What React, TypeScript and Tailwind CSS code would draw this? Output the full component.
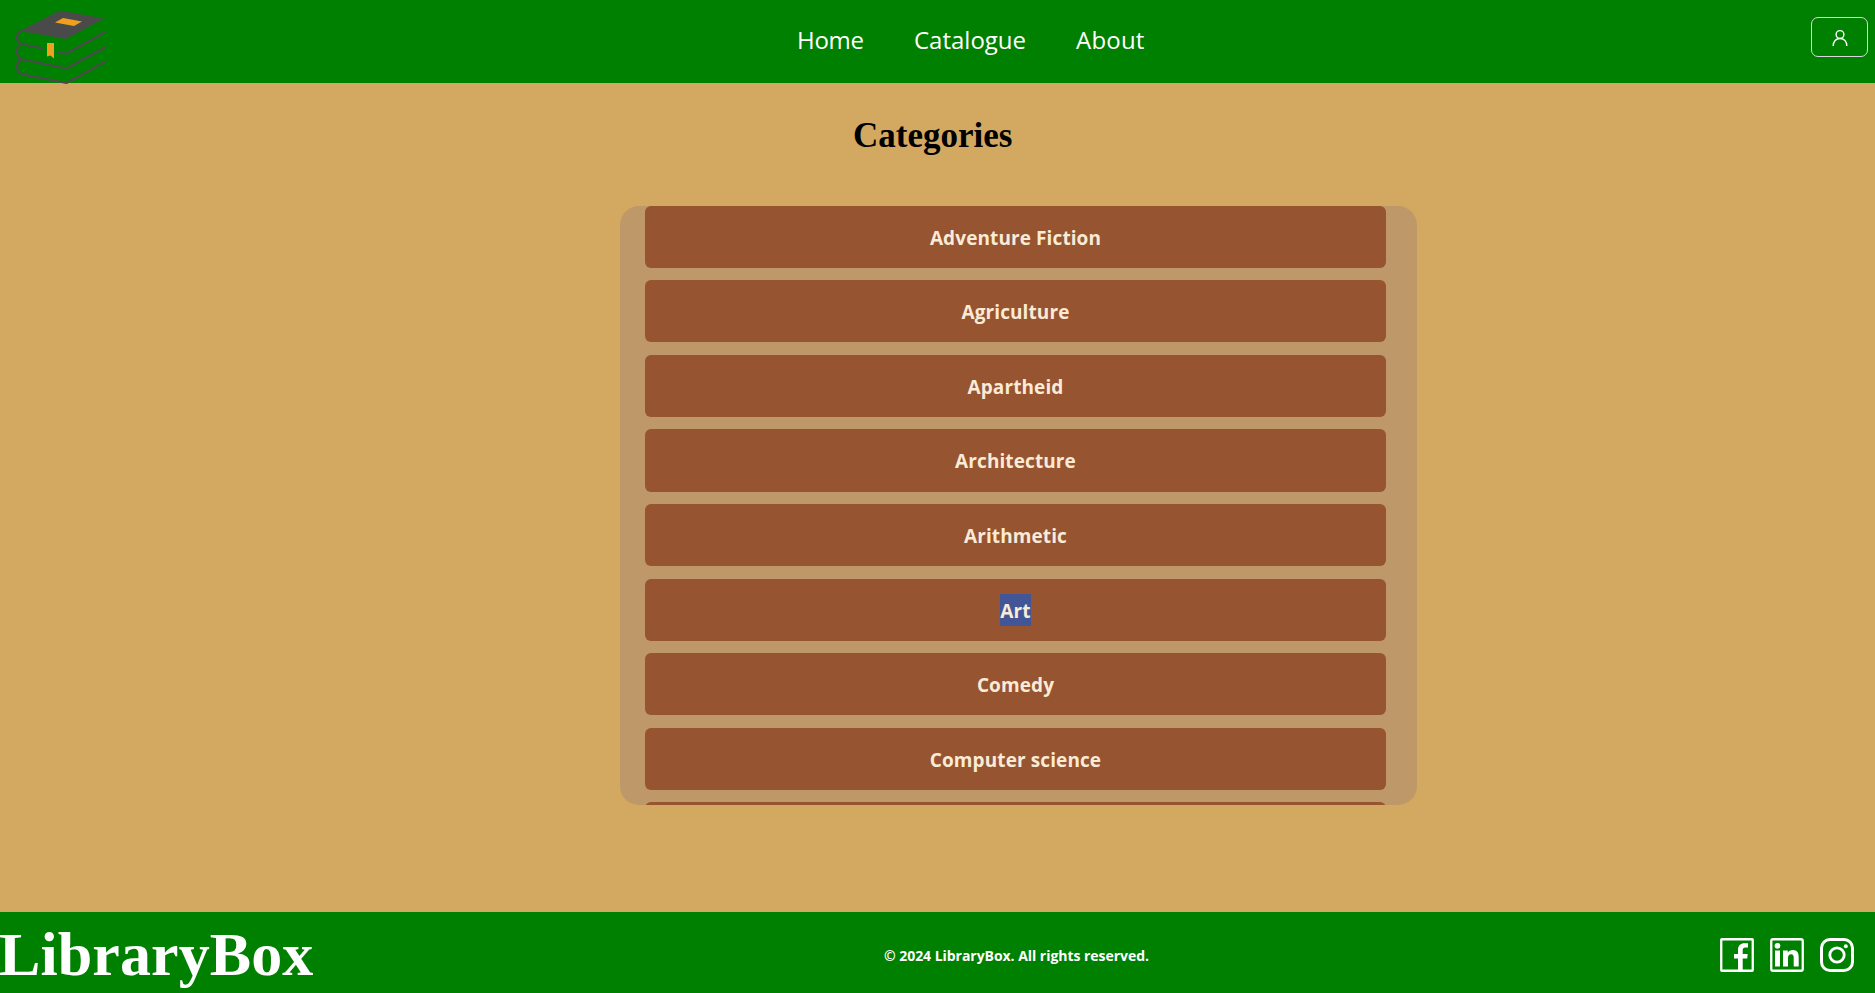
const categories = [
  "Adventure Fiction",
  "Agriculture",
  "Apartheid",
  "Architecture",
  "Arithmetic",
  "Art",
  "Comedy",
  "Computer science",
];

function BooksLogo() {
  return (
    <svg className="ml-[15px] mt-2 block h-[80px] w-[95px] shrink-0 overflow-visible" viewBox="15 8 95 80" fill="none">
      <path d="M60 10.500 104 18.500 66 39 20 31Z" fill="#4b4a4b" />
      <g stroke="#4b4a4b" strokeWidth="2.200" strokeLinejoin="round">
        <path d="M24 30.500C19 31 17 34 17 37C17 41 19 44 23 44.500L43.500 48.500M57.500 52.200L66.500 53.500L105.500 32" />
        <path d="M21 44.500C18 46 17 49 17 52C17 56 19 59 23 59.500L66.500 68.500L105.500 47" />
        <path d="M21 59.500C18 61 17 64 17 67C17 71 19 73.500 23 74.300L66.500 83L105.500 61.500" />
      </g>
      <path d="M63 18 82 21.500 74 26 55 22.500Z" fill="#f0a01e" />
      <path d="M47 43H54V58.500L50.500 55.500L47 56.500Z" fill="#f0a01e" />
    </svg>
  );
}

function UserIcon() {
  return (
    <svg className="mt-0.5 h-4 w-4" viewBox="0 0 16 16" fill="none" stroke="#fff" strokeWidth="1.4">
      <circle cx="8" cy="4.500" r="3.900" />
      <path d="M1.200 16C1.200 11.300 4 8.500 8 8.500S14.800 11.300 14.800 16" />
    </svg>
  );
}

function FacebookIcon() {
  return (
    <svg className="h-[34px] w-[34px]" viewBox="0 0 34 34" fill="none">
      <rect x="1.250" y="1.250" width="31.500" height="31.500" rx=".6" stroke="#fff" strokeWidth="2.300" />
      <path d="M18 33V20.500H14V16H18V12C18 7.500 20.500 5.200 24.500 5.200H28V9.500H25.500C23.500 9.500 22.700 10.500 22.700 12.200V16H27.700L27.200 20.500H22.700V33Z" fill="#fff" />
    </svg>
  );
}

function LinkedinIcon() {
  return (
    <svg className="h-[34px] w-[34px]" viewBox="0 0 34 34" fill="none">
      <rect x="1.250" y="1.250" width="31.500" height="31.500" rx="1.800" stroke="#fff" strokeWidth="2.300" />
      <circle cx="7.500" cy="7.800" r="2.900" fill="#fff" />
      <path d="M5 12.500H10V28.500H5ZM13 12.500H17.800V14.700C18.700 13 20.500 12 22.800 12C27.500 12 28.700 15 28.700 19.200V28.500H23.700V20.200C23.700 18 23.400 16.300 21.200 16.300C18.800 16.300 18 18 18 20.200V28.500H13Z" fill="#fff" />
    </svg>
  );
}

function InstagramIcon() {
  return (
    <svg className="h-[34px] w-[34px]" viewBox="0 0 34 34" fill="none" stroke="#fff">
      <rect x="1.500" y="1.500" width="31" height="31" rx="8.500" strokeWidth="3" />
      <circle cx="17" cy="17" r="7.200" strokeWidth="2.800" />
      <circle cx="25.800" cy="8.200" r="2" fill="#fff" stroke="none" />
    </svg>
  );
}

export default function App() {
  return (
    <div className="flex h-[993px] w-full flex-col overflow-hidden bg-[#d3a961] font-['Open_Sans','Noto_Sans',sans-serif]">
      <header className="flex h-[83px] shrink-0 items-start bg-[#008000]">
        <BooksLogo />
        <nav className="ml-[687px] flex pt-[22px] text-[24px] leading-9 text-white">
          <a className="w-[117px] tracking-[-0.3px]">Home</a>
          <a className="w-[162px]">Catalogue</a>
          <a className="tracking-[0.2px]">About</a>
        </nav>
        <button className="ml-auto mr-[7px] mt-[17px] flex h-10 w-[57px] items-center justify-center rounded-[7px] border border-[#d9d9d9]">
          <UserIcon />
        </button>
      </header>

      <main className="flex flex-1 flex-col">
        <h1 className="ml-[853px] mt-8 font-['Liberation_Serif',serif] text-[35px] font-bold leading-[42px] text-black">
          Categories
        </h1>
        <ul className="ml-[620px] mt-[48.6px] flex h-[599.4px] w-[797px] flex-col gap-[12.42px] overflow-hidden rounded-[19px] bg-[#be9869] pl-[25px] pr-[31px]">
          {categories.map((name) => (
            <li
              key={name}
              className="flex h-[62.2px] shrink-0 items-center justify-center rounded-md bg-[#965431] text-[19px] font-bold leading-8 tracking-[0.1px] text-[#faebd7]"
            >
              <span className={name === "Art" ? "bg-[#425697] pt-0.5 leading-[30px]" : "pt-0.5"}>{name}</span>
            </li>
          ))}
          <li className="h-[62.2px] shrink-0 rounded-md bg-[#965431]" />
        </ul>
      </main>

      <footer className="flex h-[81px] shrink-0 items-center bg-[#008000] text-white">
        <div className="-ml-px w-[885px] pt-0.5 font-['Liberation_Serif',serif] text-[62px] font-bold leading-[70px] tracking-[0.1px]">LibraryBox</div>
        <p className="pt-[6px] text-[14px] font-bold leading-5 tracking-[-0.04px]">© 2024 LibraryBox. All rights reserved.</p>
        <div className="ml-auto mr-[21px] mt-1 flex gap-4">
          <FacebookIcon />
          <LinkedinIcon />
          <InstagramIcon />
        </div>
      </footer>
    </div>
  );
}
